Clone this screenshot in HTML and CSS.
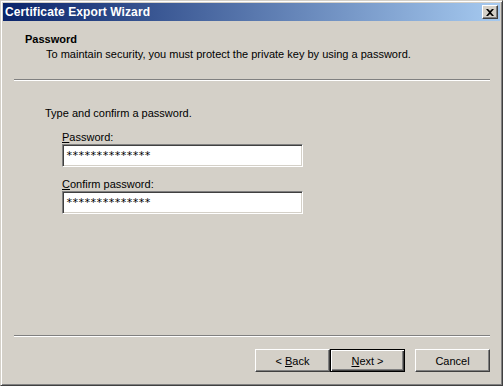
FILE: index.html
```html
<!DOCTYPE html>
<html lang="en">
<head>
    <meta charset="UTF-8">
    <title>Certificate Export Wizard</title>
    <link rel="stylesheet" href="styles.css">
</head>
<body>
    <div class="window">
        <div class="titlebar">
            <span class="title">Certificate Export Wizard</span>
            <button class="close" aria-label="Close">
                <svg width="8" height="7" viewBox="0 0 8 7">
                    <path d="M0 0h2l2 2 2-2h2L5 3.5 8 7H6L4 5 2 7H0l3-3.5z" fill="#000"/>
                </svg>
            </button>
        </div>

        <div class="header">
            <div class="heading">Password</div>
            <div class="subheading">To maintain security, you must protect the private key by using a password.</div>
        </div>
        <div class="separator"></div>

        <div class="content">
            <p class="intro">Type and confirm a password.</p>
            <div class="field">
                <label><u>P</u>assword:</label>
                <div class="textbox">**************</div>
            </div>
            <div class="field">
                <label><u>C</u>onfirm password:</label>
                <div class="textbox">**************</div>
            </div>
        </div>

        <div class="separator"></div>
        <div class="buttons">
            <button class="btn">&lt; <u>B</u>ack</button>
            <button class="btn default"><u>N</u>ext &gt;</button>
            <button class="btn cancel">Cancel</button>
        </div>
    </div>
</body>
</html>
```

FILE: styles.css
```css
body {
    margin: 0;
    font-family: "Liberation Sans", Arial, sans-serif;
    font-size: 11px;
    color: black;
}
.window {
    width: 503px;
    height: 386px;
    box-sizing: border-box;
    background-color: #d4d0c8;
    border: 1px solid;
    border-color: #d4d0c8 #404040 #404040 #d4d0c8;
    box-shadow: inset 1px 1px #fff, inset -1px -1px #808080;
    padding: 2px;
    display: flex;
    flex-direction: column;
}
.titlebar {
    height: 18px;
    background: linear-gradient(to right, #0a246a, #a6caf0);
    display: flex;
    align-items: center;
    justify-content: space-between;
    padding: 0 2px;
}
.title {
    color: white;
    font-weight: bold;
    font-size: 12px;
    letter-spacing: 0.1px;
}
.close {
    width: 16px;
    height: 14px;
    padding: 0;
    margin: 0;
    background-color: #d4d0c8;
    border: 1px solid;
    border-color: #fff #404040 #404040 #fff;
    box-shadow: inset -1px -1px #808080;
    display: flex;
    align-items: center;
    justify-content: center;
}
.header {
    padding: 12px 0 0 22px;
    height: 46px;
}
.heading {
    font-weight: bold;
    line-height: 13px;
}
.subheading {
    line-height: 13px;
    margin-top: 2px;
    padding-left: 21px;
}
.separator {
    margin: 0 10px 0 11px;
    border-top: 1px solid #808080;
    border-bottom: 1px solid #fff;
    height: 0;
}
.content {
    flex: 1;
    padding: 26px 0 0 42px;
}
.intro {
    margin: 0 0 11px;
    line-height: 13px;
}
.field {
    padding-left: 17px;
    margin-bottom: 11px;
}
.field label {
    display: block;
    line-height: 13px;
    margin-bottom: 0;
}
.textbox {
    width: 241px;
    height: 23px;
    box-sizing: border-box;
    background-color: white;
    border: 1px solid;
    border-color: #808080 #fff #fff #808080;
    box-shadow: inset 1px 1px #404040, inset -1px -1px #d4d0c8;
    padding: 4px 0 0 3px;
    line-height: 13px;
    font-family: "DejaVu Sans Mono", monospace;
    font-size: 11px;
    letter-spacing: -0.6px;
}
.buttons {
    display: flex;
    padding: 12px 0 0 252px;
    height: 34px;
}
.btn {
    width: 75px;
    height: 23px;
    padding: 0;
    background-color: #d4d0c8;
    font-family: "Liberation Sans", Arial, sans-serif;
    font-size: 11px;
    color: black;
    border: 1px solid;
    border-color: #fff #404040 #404040 #fff;
    box-shadow: inset -1px -1px #808080;
}
.btn.default {
    border-color: #000;
    box-shadow: inset 1px 1px #fff, inset -1px -1px #404040, inset -2px -2px #808080;
}
.btn.cancel {
    margin-left: 10px;
}
```
